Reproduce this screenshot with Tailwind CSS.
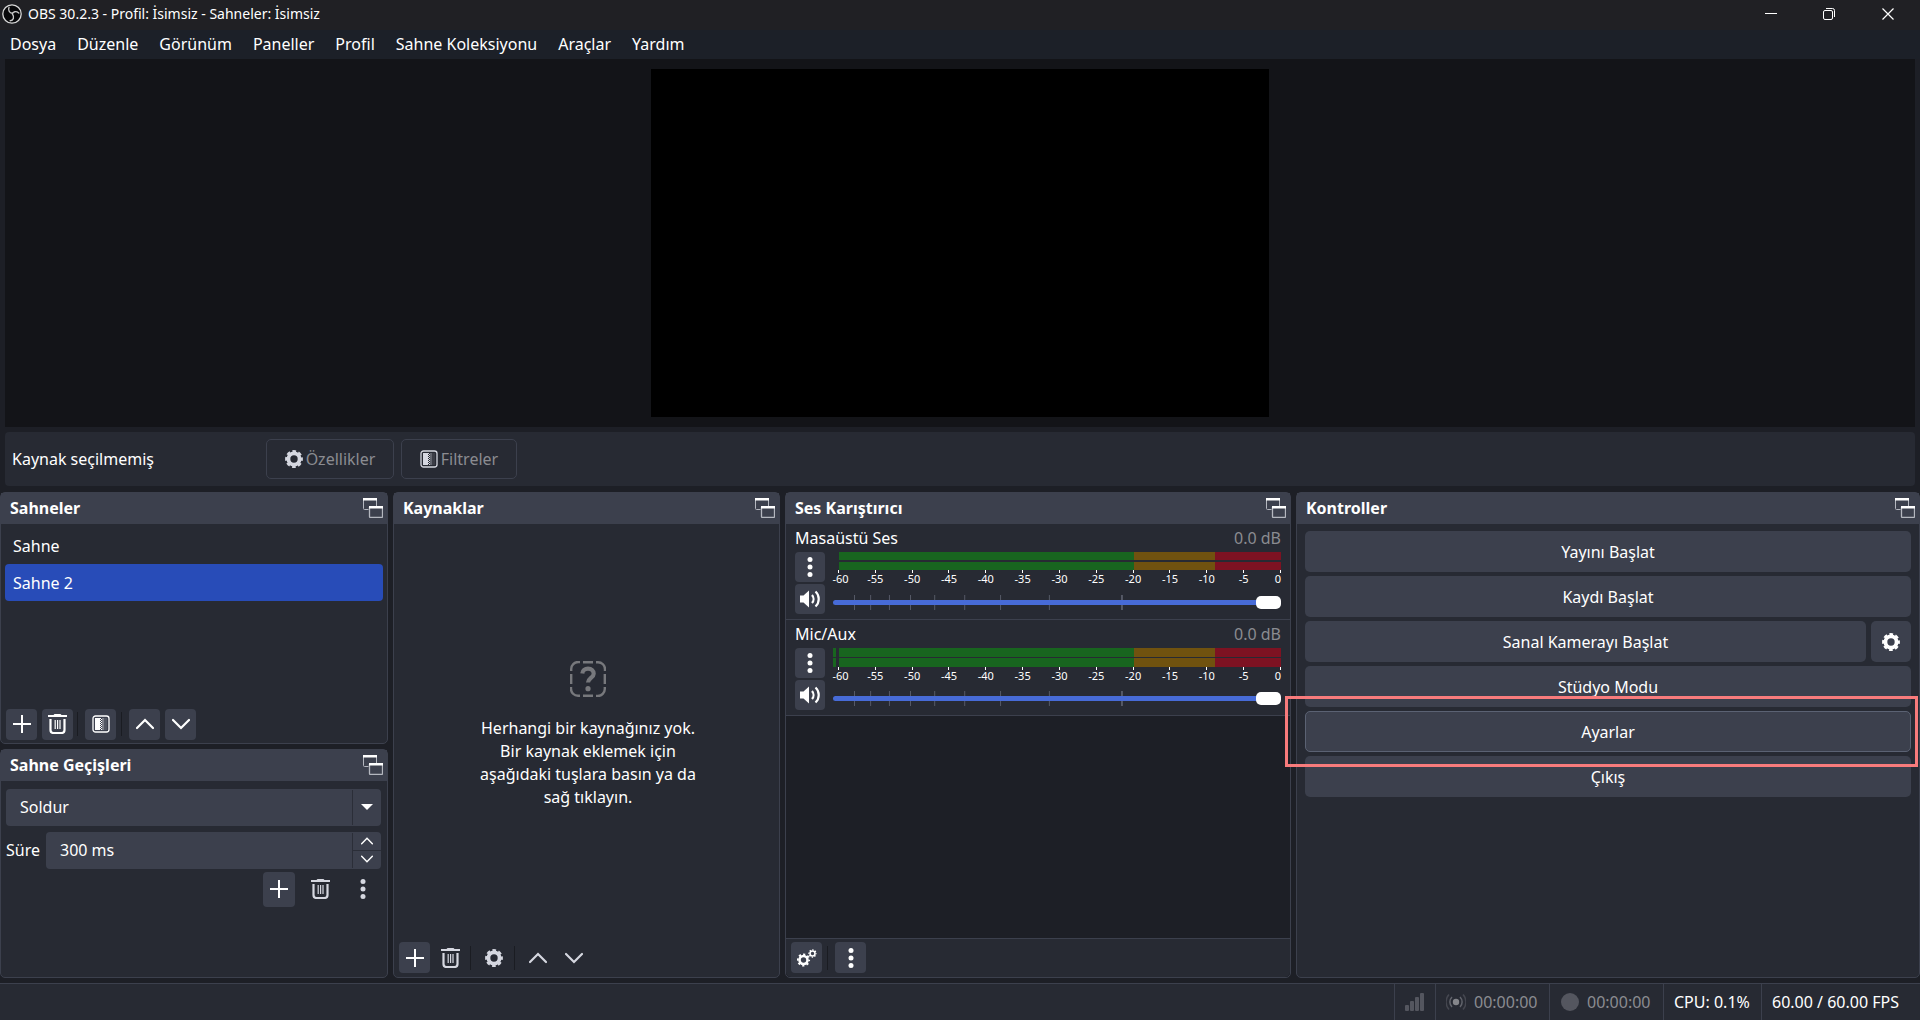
<!DOCTYPE html>
<html lang="tr">
<head>
<meta charset="utf-8">
<title>OBS 30.2.3 - Profil: İsimsiz - Sahneler: İsimsiz</title>
<script src="https://cdn.jsdelivr.net/npm/@tailwindcss/browser@4"></script>
</head>
<body class="flex h-screen flex-col overflow-hidden bg-[#1d1f26] font-['Noto_Sans','Open_Sans',sans-serif] text-base leading-[22px] text-white">

<svg class="hidden" aria-hidden="true">
  <symbol id="plus" viewBox="0 0 18 18"><path d="M9 0v18M0 9h18" fill="none" stroke="currentColor" stroke-width="2"/></symbol>
  <symbol id="trash" viewBox="0 0 20 20"><path d="M6.500 0h6l1 1h5.500v2H0V1h5.500z" fill="currentColor"/><path d="M2.500 5v11a3 3 0 0 0 3 3h8a3 3 0 0 0 3-3V5" fill="none" stroke="currentColor" stroke-width="2.200"/><path d="M7.200 6v9M9.600 6v9M12 6v9" fill="none" stroke="currentColor" stroke-width="1.200"/></symbol>
  <symbol id="filter" viewBox="0 0 18 18"><rect x="1" y="1" width="16" height="16" rx="2.500" fill="none" stroke="currentColor" stroke-width="1.300"/><path d="M3 3h5v12H3z" fill="currentColor"/><path d="M8.500 3v12" stroke="currentColor" stroke-dasharray="1 1"/><path d="M9.500 4v11" stroke="currentColor" stroke-dasharray="1 1"/><path d="M10 3h2v12h-2z" fill="currentColor" opacity=".35"/><path d="M12 3h3v12h-3z" fill="currentColor" opacity=".12"/></symbol>
  <symbol id="up" viewBox="0 0 18 18"><path d="M1 13l8-8 8 8" fill="none" stroke="currentColor" stroke-width="2.200" stroke-linecap="round"/></symbol>
  <symbol id="down" viewBox="0 0 18 18"><path d="M1 5l8 8 8-8" fill="none" stroke="currentColor" stroke-width="2.200" stroke-linecap="round"/></symbol>
  <symbol id="dots" viewBox="0 0 6 20"><circle cx="3" cy="2.500" r="2.500" fill="currentColor"/><circle cx="3" cy="10" r="2.500" fill="currentColor"/><circle cx="3" cy="17.500" r="2.500" fill="currentColor"/></symbol>
  <symbol id="gear" viewBox="0 0 18 18"><circle cx="9" cy="9" r="5.600" fill="none" stroke="currentColor" stroke-width="3.800"/><circle cx="9" cy="9" r="7.600" fill="none" stroke="currentColor" stroke-width="2.600" stroke-dasharray="3.600 2.369" stroke-dashoffset="1.800"/></symbol>
  <symbol id="popout" viewBox="0 0 20 20"><path d="M5.500 11.500H1.500a1 1 0 0 1-1-1V1h13v7" fill="none" stroke="#b4b7bf"/><path d="M0 0h14v2.500H0z" fill="#fff"/><path d="M6.500 9v9.500a1 1 0 0 0 1 1h11a1 1 0 0 0 1-1V9" fill="none" stroke="#b4b7bf" stroke-width="1.300"/><path d="M6 8h14v2.500H6z" fill="#fff"/></symbol>
  <symbol id="speaker" viewBox="0 0 20 18"><path d="M0 5.500h3.500L9 0.500v17L3.500 12.500H0z" fill="currentColor"/><path d="M12 5a6 6 0 0 1 0 8M15.500 1.500c4.300 3.800 4.300 11.200 0 15" fill="none" stroke="currentColor" stroke-width="2.200"/></symbol>
  <symbol id="gears" viewBox="0 0 20 18"><circle cx="6.500" cy="11" r="4" fill="none" stroke="currentColor" stroke-width="2.600"/><circle cx="6.500" cy="11" r="5.700" fill="none" stroke="currentColor" stroke-width="1.800" stroke-dasharray="2.200 2.277" stroke-dashoffset="1.100"/><circle cx="15.500" cy="4.500" r="2.500" fill="none" stroke="currentColor" stroke-width="1.600"/><circle cx="15.500" cy="4.500" r="3.600" fill="none" stroke="currentColor" stroke-width="1.200" stroke-dasharray="1.400 1.427" stroke-dashoffset=".7"/></symbol>
</svg>

<!-- Title bar -->
<header class="flex h-[30px] shrink-0 items-center bg-[#202024] pb-[2px] text-sm">
  <svg class="ml-[2px] size-5" viewBox="0 0 20 20"><circle cx="10" cy="10" r="9.200" fill="#08080a" stroke="#d8d8d8" stroke-width="1.300"/><path d="M7 3.500C5.800 6 7.500 9 10.300 9.300M16.800 9C14 6.800 11 7.500 10.300 10M8.200 16.800C11.500 16.500 12.500 13 10.600 10.300" fill="none" stroke="#c9c9c9" stroke-width="1.400" stroke-linecap="round"/></svg>
  <h1 class="ml-[6px] flex-1">OBS 30.2.3 - Profil: İsimsiz - Sahneler: İsimsiz</h1>
  <button class="flex h-full w-[58px] items-center justify-center" aria-label="Simge durumuna küçült"><svg class="h-3 w-3" viewBox="0 0 12 12"><path d="M0 5.500h12" stroke="#fff"/></svg></button>
  <button class="flex h-full w-[58px] items-center justify-center" aria-label="Aşağı geri getir"><svg class="h-3 w-3" viewBox="0 0 12 12" fill="none" stroke="#fff"><rect x=".5" y="2.500" width="9" height="9" rx="1.500"/><path d="M3 .5h6.500a2 2 0 0 1 2 2V9"/></svg></button>
  <button class="mr-[3px] flex h-full w-[59px] items-center justify-center" aria-label="Kapat"><svg class="h-3 w-3" viewBox="0 0 12 12"><path d="M.5.5l11 11M11.500.5l-11 11" stroke="#fff" stroke-width="1.200"/></svg></button>
</header>

<nav class="flex h-[29px] shrink-0 items-center gap-[21px] bg-[#1c2028] px-[10px] pb-[2px]">
  <a href="#">Dosya</a><a href="#">Düzenle</a><a href="#">Görünüm</a><a href="#">Paneller</a><a href="#">Profil</a><a href="#">Sahne Koleksiyonu</a><a href="#">Araçlar</a><a href="#">Yardım</a>
</nav>

<main class="flex min-h-0 flex-1 flex-col">
  <!-- Preview -->
  <section class="mx-[5px] min-h-0 flex-[368] bg-[#131418]" aria-label="Önizleme">
    <div class="flex h-full justify-center py-[10px]"><div class="aspect-video h-full bg-black"></div></div>
  </section>

  <!-- Source context bar -->
  <section class="mx-[5px] mt-[5px] flex h-[54px] shrink-0 items-center rounded bg-[#272a33] pl-[7px]">
    <span class="w-[254px]">Kaynak seçilmemiş</span>
    <button class="flex h-10 w-[128px] items-center justify-center gap-[3px] rounded-[5px] border border-[#3c404d] text-[#8b8c91]"><svg class="size-[18px] text-[#d5d7e0]"><use href="#gear"/></svg>Özellikler</button>
    <button class="ml-[7px] flex h-10 w-[116px] items-center justify-center gap-[3px] rounded-[5px] border border-[#3c404d] text-[#8b8c91]"><svg class="size-[18px] text-[#d5d7e0]"><use href="#filter"/></svg>Filtreler</button>
  </section>

  <!-- Docks -->
  <div class="mt-[6px] grid min-h-0 flex-[486] grid-cols-[388fr_387fr_506fr_624fr] gap-[5px]">

    <div class="flex min-h-0 flex-col gap-[5px]">
      <section class="flex min-h-0 flex-[252] flex-col rounded-[5px] border border-[#3c404d] bg-[#272a33]">
        <h2 class="flex h-[31px] shrink-0 items-center justify-between bg-[#3c404d] pr-1 pb-px pl-[9px] font-bold">Sahneler<button aria-label="Ayır"><svg class="size-5"><use href="#popout"/></svg></button></h2>
        <ul class="flex-1 px-1 pt-[3px]">
          <li class="flex h-[37px] items-center px-2">Sahne</li>
          <li class="flex h-[37px] items-center rounded bg-[#284cb8] px-2">Sahne 2</li>
        </ul>
        <div class="flex items-center px-[5px] pb-[3px]">
          <button class="flex size-[31px] items-center justify-center rounded bg-[#3c404d]" aria-label="Ekle"><svg class="size-[18px]"><use href="#plus"/></svg></button>
          <button class="ml-[5px] flex size-[31px] items-center justify-center rounded bg-[#3c404d]" aria-label="Sil"><svg class="size-5"><use href="#trash"/></svg></button>
          <span class="mr-[7px] ml-1 h-6 w-px bg-[#1a1c22]"></span>
          <button class="flex size-[31px] items-center justify-center rounded bg-[#3c404d]" aria-label="Filtreler"><svg class="size-[18px]"><use href="#filter"/></svg></button>
          <span class="mr-[7px] ml-[5px] h-6 w-px bg-[#1a1c22]"></span>
          <button class="flex size-[31px] items-center justify-center rounded bg-[#3c404d]" aria-label="Yukarı"><svg class="size-[18px]"><use href="#up"/></svg></button>
          <button class="ml-[5px] flex size-[31px] items-center justify-center rounded bg-[#3c404d]" aria-label="Aşağı"><svg class="size-[18px]"><use href="#down"/></svg></button>
        </div>
      </section>

      <section class="flex min-h-0 flex-[229] flex-col rounded-[5px] border border-[#3c404d] bg-[#272a33]">
        <h2 class="flex h-[31px] shrink-0 items-center justify-between bg-[#3c404d] pr-1 pb-px pl-[9px] font-bold">Sahne Geçişleri<button aria-label="Ayır"><svg class="size-5"><use href="#popout"/></svg></button></h2>
        <div class="flex flex-col px-[5px] pt-2">
          <div class="relative mr-px">
            <select aria-label="Geçiş" class="h-[37px] w-full appearance-none rounded bg-[#3c404d] px-[14px]"><option>Soldur</option></select>
            <span class="pointer-events-none absolute inset-y-px right-0 flex w-[29px] items-center justify-center border-l border-[#2b2e38]"><svg class="h-[6px] w-3" viewBox="0 0 12 6"><path d="M0 0h12L6 6z" fill="#fff"/></svg></span>
          </div>
          <div class="mt-[6px] mr-px flex items-center">
            <label for="duration" class="w-10">Süre</label>
            <div class="flex h-[37px] flex-1 rounded bg-[#3c404d]">
              <input id="duration" value="300 ms" class="min-w-0 flex-1 bg-transparent px-[14px]">
              <div class="my-px flex w-[29px] flex-col border-l border-[#2b2e38]">
                <button class="flex flex-1 items-center justify-center border-b border-[#2b2e38]" aria-label="Artır"><svg class="size-3"><use href="#up"/></svg></button>
                <button class="flex flex-1 items-center justify-center" aria-label="Azalt"><svg class="size-3"><use href="#down"/></svg></button>
              </div>
            </div>
          </div>
          <div class="mt-[3px] mr-[3px] flex justify-end gap-[10px] text-[#d5d7e0]">
            <button class="flex h-[35px] w-8 items-center justify-center rounded bg-[#3c404d] text-white" aria-label="Ekle"><svg class="size-[18px]"><use href="#plus"/></svg></button>
            <button class="flex h-[35px] w-8 items-center justify-center" aria-label="Sil"><svg class="size-5"><use href="#trash"/></svg></button>
            <button class="flex h-[35px] w-8 items-center justify-center" aria-label="Seçenekler"><svg class="h-5 w-[6px]"><use href="#dots"/></svg></button>
          </div>
        </div>
      </section>
    </div>

    <section class="flex min-h-0 flex-col rounded-[5px] border border-[#3c404d] bg-[#272a33]">
      <h2 class="flex h-[31px] shrink-0 items-center justify-between bg-[#3c404d] pr-1 pb-px pl-[9px] font-bold">Kaynaklar<button aria-label="Ayır"><svg class="size-5"><use href="#popout"/></svg></button></h2>
      <div class="flex flex-1 flex-col items-center justify-center gap-5 pt-1 pl-[3px]">
        <svg class="size-9 text-[#77787c]" viewBox="0 0 36 36" fill="none" stroke="currentColor" stroke-width="2.400"><path d="M1.200 10V8a7 7 0 0 1 7-7H10M13 1.200h10M26 1.200h2a7 7 0 0 1 7 7V10M34.800 13v10M34.800 26v2a7 7 0 0 1-7 7H26M23 34.800H13M10 34.800H8a7 7 0 0 1-7-7V26M1.200 23V13"/><path d="M12.300 12.500c.2-3.200 2.700-4.800 5.700-4.800 3.400 0 5.700 2 5.700 5 0 4-5.700 4.600-5.700 8.900" stroke-width="4.200"/><circle cx="18" cy="27.700" r="2.600" fill="currentColor" stroke="none"/></svg>
        <p class="w-[230px] text-center leading-[23px]">Herhangi bir kaynağınız yok.<br>Bir kaynak eklemek için<br>aşağıdaki tuşlara basın ya da<br>sağ tıklayın.</p>
      </div>
      <div class="flex items-center px-[5px] pb-1 text-[#d5d7e0]">
        <button class="flex size-[31px] items-center justify-center rounded bg-[#3c404d] text-white" aria-label="Ekle"><svg class="size-[18px]"><use href="#plus"/></svg></button>
        <button class="ml-[5px] flex size-[31px] items-center justify-center" aria-label="Sil"><svg class="size-5"><use href="#trash"/></svg></button>
        <span class="mr-[7px] ml-1 h-6 w-px bg-[#1a1c22]"></span>
        <button class="flex size-[31px] items-center justify-center" aria-label="Özellikler"><svg class="size-[18px]"><use href="#gear"/></svg></button>
        <span class="mr-[7px] ml-[5px] h-6 w-px bg-[#1a1c22]"></span>
        <button class="flex size-[31px] items-center justify-center" aria-label="Yukarı"><svg class="size-[18px]"><use href="#up"/></svg></button>
        <button class="ml-[5px] flex size-[31px] items-center justify-center" aria-label="Aşağı"><svg class="size-[18px]"><use href="#down"/></svg></button>
      </div>
    </section>

    <section class="flex min-h-0 flex-col rounded-[5px] border border-[#3c404d] bg-[#1d1f26]">
      <h2 class="flex h-[31px] shrink-0 items-center justify-between bg-[#3c404d] pr-1 pb-px pl-[9px] font-bold">Ses Karıştırıcı<button aria-label="Ayır"><svg class="size-5"><use href="#popout"/></svg></button></h2>

      <article class="h-24 border-b border-[#3c404d] bg-[#272a33] pt-[3px] pr-[9px] pl-[9px]">
        <div class="flex justify-between"><label for="vol-desktop">Masaüstü Ses</label><output class="text-[#8b8c91]">0.0 dB</output></div>
        <div class="mt-[3px] flex gap-2">
          <div class="flex flex-col gap-[2px]">
            <button class="flex size-[30px] items-center justify-center rounded bg-[#3c404d]" aria-label="Seçenekler"><svg class="h-5 w-[6px]"><use href="#dots"/></svg></button>
            <button class="flex size-[30px] items-center justify-center rounded bg-[#3c404d]" aria-label="Sessiz"><svg class="h-[18px] w-5"><use href="#speaker"/></svg></button>
          </div>
          <div class="flex-1">
            <div class="ml-[6px] flex flex-col gap-[2px]">
              <div class="grid h-2 grid-cols-[295fr_81fr_66fr]"><i class="bg-[#18651f]"></i><i class="bg-[#70520f]"></i><i class="bg-[#7d1222]"></i></div>
              <div class="grid h-2 grid-cols-[295fr_81fr_66fr]"><i class="bg-[#18651f]"></i><i class="bg-[#70520f]"></i><i class="bg-[#7d1222]"></i></div>
            </div>
            <div class="ml-[5px] flex justify-between text-[11px] leading-3">
              <span class="flex w-px flex-col items-center"><i class="h-[3px] w-px bg-white"></i><span class="pl-1">-60</span></span>
              <span class="flex w-px flex-col items-center"><i class="h-[3px] w-px bg-white"></i>-55</span>
              <span class="flex w-px flex-col items-center"><i class="h-[3px] w-px bg-white"></i>-50</span>
              <span class="flex w-px flex-col items-center"><i class="h-[3px] w-px bg-white"></i>-45</span>
              <span class="flex w-px flex-col items-center"><i class="h-[3px] w-px bg-white"></i>-40</span>
              <span class="flex w-px flex-col items-center"><i class="h-[3px] w-px bg-white"></i>-35</span>
              <span class="flex w-px flex-col items-center"><i class="h-[3px] w-px bg-white"></i>-30</span>
              <span class="flex w-px flex-col items-center"><i class="h-[3px] w-px bg-white"></i>-25</span>
              <span class="flex w-px flex-col items-center"><i class="h-[3px] w-px bg-white"></i>-20</span>
              <span class="flex w-px flex-col items-center"><i class="h-[3px] w-px bg-white"></i>-15</span>
              <span class="flex w-px flex-col items-center"><i class="h-[3px] w-px bg-white"></i>-10</span>
              <span class="flex w-px flex-col items-center"><i class="h-[3px] w-px bg-white"></i>-5</span>
              <span class="flex w-px flex-col items-end"><i class="h-[3px] w-px bg-white"></i>0</span>
            </div>
            <div class="mt-[10px] grid h-[15px] items-center">
              <svg class="col-start-1 row-start-1 h-[15px] w-full" stroke="#555966"><line x1="4.800%" x2="4.800%" y1="0" y2="15"/><line x1="8.400%" x2="8.400%" y1="0" y2="15"/><line x1="12.600%" x2="12.600%" y1="0" y2="15"/><line x1="17.300%" x2="17.300%" y1="0" y2="15"/><line x1="22.700%" x2="22.700%" y1="0" y2="15"/><line x1="29.400%" x2="29.400%" y1="0" y2="15"/><line x1="37.400%" x2="37.400%" y1="0" y2="15"/><line x1="48.300%" x2="48.300%" y1="0" y2="15"/><line x1="64.500%" x2="64.500%" y1="0" y2="15" stroke-width="2"/></svg>
              <input id="vol-desktop" type="range" value="100" class="z-10 col-start-1 row-start-1 h-[13px] w-full appearance-none bg-transparent [&::-webkit-slider-runnable-track]:h-[5px] [&::-webkit-slider-runnable-track]:rounded-sm [&::-webkit-slider-runnable-track]:bg-[#476bd7] [&::-webkit-slider-thumb]:-mt-1 [&::-webkit-slider-thumb]:h-[13px] [&::-webkit-slider-thumb]:w-[25px] [&::-webkit-slider-thumb]:appearance-none [&::-webkit-slider-thumb]:rounded-[5px] [&::-webkit-slider-thumb]:bg-white">
            </div>
          </div>
        </div>
      </article>

      <article class="h-24 border-b border-[#3c404d] bg-[#272a33] pt-[3px] pr-[9px] pl-[9px]">
        <div class="flex justify-between"><label for="vol-mic">Mic/Aux</label><output class="text-[#8b8c91]">0.0 dB</output></div>
        <div class="mt-[3px] flex gap-2">
          <div class="flex flex-col gap-[2px]">
            <button class="flex size-[30px] items-center justify-center rounded bg-[#3c404d]" aria-label="Seçenekler"><svg class="h-5 w-[6px]"><use href="#dots"/></svg></button>
            <button class="flex size-[30px] items-center justify-center rounded bg-[#3c404d]" aria-label="Sessiz"><svg class="h-[18px] w-5"><use href="#speaker"/></svg></button>
          </div>
          <div class="flex-1">
            <div class="flex gap-[3px]">
              <div class="flex w-[3px] flex-col gap-px"><i class="h-[9px] bg-[#18651f]"></i><i class="h-[9px] bg-[#18651f]"></i></div>
              <div class="flex flex-1 flex-col gap-px">
                <div class="grid h-[9px] grid-cols-[295fr_81fr_66fr]"><i class="bg-[#18651f]"></i><i class="bg-[#70520f]"></i><i class="bg-[#7d1222]"></i></div>
                <div class="grid h-[9px] grid-cols-[295fr_81fr_66fr]"><i class="bg-[#18651f]"></i><i class="bg-[#70520f]"></i><i class="bg-[#7d1222]"></i></div>
              </div>
            </div>
            <div class="ml-[5px] flex justify-between text-[11px] leading-3">
              <span class="flex w-px flex-col items-center"><i class="h-[3px] w-px bg-white"></i><span class="pl-1">-60</span></span>
              <span class="flex w-px flex-col items-center"><i class="h-[3px] w-px bg-white"></i>-55</span>
              <span class="flex w-px flex-col items-center"><i class="h-[3px] w-px bg-white"></i>-50</span>
              <span class="flex w-px flex-col items-center"><i class="h-[3px] w-px bg-white"></i>-45</span>
              <span class="flex w-px flex-col items-center"><i class="h-[3px] w-px bg-white"></i>-40</span>
              <span class="flex w-px flex-col items-center"><i class="h-[3px] w-px bg-white"></i>-35</span>
              <span class="flex w-px flex-col items-center"><i class="h-[3px] w-px bg-white"></i>-30</span>
              <span class="flex w-px flex-col items-center"><i class="h-[3px] w-px bg-white"></i>-25</span>
              <span class="flex w-px flex-col items-center"><i class="h-[3px] w-px bg-white"></i>-20</span>
              <span class="flex w-px flex-col items-center"><i class="h-[3px] w-px bg-white"></i>-15</span>
              <span class="flex w-px flex-col items-center"><i class="h-[3px] w-px bg-white"></i>-10</span>
              <span class="flex w-px flex-col items-center"><i class="h-[3px] w-px bg-white"></i>-5</span>
              <span class="flex w-px flex-col items-end"><i class="h-[3px] w-px bg-white"></i>0</span>
            </div>
            <div class="mt-[9px] grid h-[15px] items-center">
              <svg class="col-start-1 row-start-1 h-[15px] w-full" stroke="#555966"><line x1="4.800%" x2="4.800%" y1="0" y2="15"/><line x1="8.400%" x2="8.400%" y1="0" y2="15"/><line x1="12.600%" x2="12.600%" y1="0" y2="15"/><line x1="17.300%" x2="17.300%" y1="0" y2="15"/><line x1="22.700%" x2="22.700%" y1="0" y2="15"/><line x1="29.400%" x2="29.400%" y1="0" y2="15"/><line x1="37.400%" x2="37.400%" y1="0" y2="15"/><line x1="48.300%" x2="48.300%" y1="0" y2="15"/><line x1="64.500%" x2="64.500%" y1="0" y2="15" stroke-width="2"/></svg>
              <input id="vol-mic" type="range" value="100" class="z-10 col-start-1 row-start-1 h-[13px] w-full appearance-none bg-transparent [&::-webkit-slider-runnable-track]:h-[5px] [&::-webkit-slider-runnable-track]:rounded-sm [&::-webkit-slider-runnable-track]:bg-[#476bd7] [&::-webkit-slider-thumb]:-mt-1 [&::-webkit-slider-thumb]:h-[13px] [&::-webkit-slider-thumb]:w-[25px] [&::-webkit-slider-thumb]:appearance-none [&::-webkit-slider-thumb]:rounded-[5px] [&::-webkit-slider-thumb]:bg-white">
            </div>
          </div>
        </div>
      </article>

      <div class="mt-auto flex items-center rounded-b-[5px] border-t border-[#3c404d] bg-[#272a33] px-[5px] pt-[3px] pb-1">
        <button class="flex size-[31px] items-center justify-center rounded bg-[#3c404d]" aria-label="Gelişmiş ses özellikleri"><svg class="h-[18px] w-5"><use href="#gears"/></svg></button>
        <span class="mr-[7px] ml-[5px] h-6 w-px bg-[#1a1c22]"></span>
        <button class="flex size-[31px] items-center justify-center rounded bg-[#3c404d]" aria-label="Seçenekler"><svg class="h-5 w-[6px]"><use href="#dots"/></svg></button>
      </div>
    </section>

    <section class="flex min-h-0 flex-col rounded-[5px] border border-[#3c404d] bg-[#272a33]">
      <h2 class="flex h-[31px] shrink-0 items-center justify-between bg-[#3c404d] pr-1 pb-px pl-[9px] font-bold">Kontroller<button aria-label="Ayır"><svg class="size-5"><use href="#popout"/></svg></button></h2>
      <div class="flex flex-col gap-1 px-2 pt-[7px]">
        <button class="h-[41px] rounded-[5px] bg-[#3c404d]">Yayını Başlat</button>
        <button class="h-[41px] rounded-[5px] bg-[#3c404d]">Kaydı Başlat</button>
        <div class="flex gap-[5px]">
          <button class="h-[41px] flex-1 rounded-[5px] bg-[#3c404d]">Sanal Kamerayı Başlat</button>
          <button class="flex h-[41px] w-10 items-center justify-center rounded-[5px] bg-[#3c404d]" aria-label="Sanal kamera ayarları"><svg class="size-[18px]"><use href="#gear"/></svg></button>
        </div>
        <button class="h-[41px] rounded-[5px] bg-[#3c404d]">Stüdyo Modu</button>
        <div class="relative grid">
          <button class="h-[41px] rounded-[5px] border border-[#5b6273] bg-[#3c404d]">Ayarlar</button>
          <span class="pointer-events-none absolute -top-[15px] -right-[7px] -bottom-[15px] -left-5 border-3 border-[#f87b7c]"></span>
        </div>
        <button class="h-[41px] rounded-[5px] bg-[#3c404d]">Çıkış</button>
      </div>
    </section>
  </div>
</main>

<!-- Status bar -->
<footer class="mt-[5px] flex h-[37px] shrink-0 items-stretch justify-end border-t border-[#3c404d] bg-[#272a33]">
  <div class="flex w-[41px] items-center justify-center border-l border-[#3c404d]"><svg class="h-[18px] w-5" viewBox="0 0 20 18" fill="#54565f"><rect y="12" width="4" height="6" rx="1"/><rect x="5" y="8" width="4" height="10" rx="1"/><rect x="10" y="4" width="4" height="14" rx="1"/><rect x="15" y="0" width="4" height="18" rx="1"/></svg></div>
  <div class="flex w-[114px] items-center gap-2 border-l border-[#3c404d] pl-[10px] text-[#8b8c91]"><svg class="h-[18px] w-5" viewBox="0 0 20 18" fill="none" stroke-width="1.500"><circle cx="10" cy="9" r="3.200" fill="#85868b"/><path d="M6 4a7 7 0 0 0 0 10M14 4a7 7 0 0 1 0 10" stroke="#62646c"/><path d="M3 1.500a11 11 0 0 0 0 15M17 1.500a11 11 0 0 1 0 15" stroke="#454750"/></svg>00:00:00</div>
  <div class="flex w-[114px] items-center gap-2 border-l border-[#3c404d] pl-[11px] text-[#8b8c91]"><svg class="size-[18px]" viewBox="0 0 18 18"><circle cx="9" cy="9" r="9" fill="#54565f"/></svg>00:00:00</div>
  <div class="flex w-[98px] items-center border-l border-[#3c404d] pl-[10px]">CPU: 0.1%</div>
  <div class="flex w-[159px] items-center border-l border-[#3c404d] pl-[10px]">60.00 / 60.00 FPS</div>
</footer>
</body>
</html>
